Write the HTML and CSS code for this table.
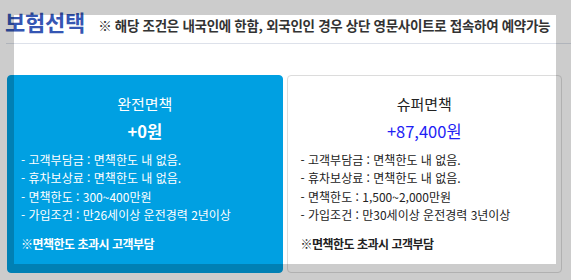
FILE: index.html
```html
<!DOCTYPE html>
<html lang="ko">
<head>
<meta charset="utf-8">
<link rel="stylesheet" href="styles.css">
</head>
<body>
<div class="header">
  <h2 class="title">보험선택</h2>
  <span class="notice">※ 해당 조건은 내국인에 한함, 외국인인 경우 상단 영문사이트로 접속하여 예약가능</span>
</div>
<div class="cards">
  <div class="card selected">
    <div class="card-name">완전면책</div>
    <div class="card-price">+0원</div>
    <ul class="terms">
      <li>- 고객부담금 : 면책한도 내 없음.</li>
      <li>- 휴차보상료 : 면책한도 내 없음.</li>
      <li>- 면책한도 : 300~400만원</li>
      <li>- 가입조건 : 만26세이상 운전경력 2년이상</li>
    </ul>
    <div class="note">※면책한도 초과시 고객부담</div>
  </div>
  <div class="card">
    <div class="card-name">슈퍼면책</div>
    <div class="card-price">+87,400원</div>
    <ul class="terms">
      <li>- 고객부담금 : 면책한도 내 없음.</li>
      <li>- 휴차보상료 : 면책한도 내 없음.</li>
      <li>- 면책한도 : 1,500~2,000만원</li>
      <li>- 가입조건 : 만30세이상 운전경력 3년이상</li>
    </ul>
    <div class="note">※면책한도 초과시 고객부담</div>
  </div>
</div>
<div class="spotlight"></div>
</body>
</html>
```
FILE: styles.css
```css
html, body {
  margin: 0;
  padding: 0;
  background: #ffffff;
  font-family: "Noto Sans CJK KR", "Noto Sans", sans-serif;
  overflow: hidden;
}
body {
  position: relative;
  width: 571px;
  height: 280px;
}
.header {
  display: flex;
  align-items: baseline;
  margin-left: 6px;
  height: 44px;
  border-bottom: 1px solid #dde1ea;
  box-sizing: border-box;
}
.title {
  margin: 0;
  margin-left: -1px;
  padding-top: 6px;
  font-size: 22px;
  line-height: 30px;
  font-weight: 700;
  color: #3556b3;
  letter-spacing: -0.2px;
}
.notice {
  margin-left: 13px;
  font-size: 13.5px;
  font-weight: 700;
  color: #333333;
  letter-spacing: -0.3px;
}
.cards {
  display: flex;
  gap: 4px;
  margin: 31px 9px 0 7px;
}
.card {
  flex: 1;
  height: 198px;
  box-sizing: border-box;
  border: 1px solid #dcdcdc;
  border-radius: 4px;
  background: #ffffff;
  color: #222222;
  padding: 16px 0 0 13px;
}
.card.selected {
  background: #00a0e2;
  border-color: #00a0e2;
  color: #ffffff;
}
.card-name {
  text-align: center;
  padding-right: 13px;
  font-size: 15px;
  line-height: 24px;
}
.card-price {
  text-align: center;
  padding-right: 13px;
  margin-top: 2px;
  font-size: 16.5px;
  line-height: 26px;
  color: #1f1ff5;
}
.selected .card-price {
  color: #ffffff;
  font-weight: 700;
}
.terms {
  list-style: none;
  margin: 7px 0 0;
  padding: 0;
  font-size: 12px;
  line-height: 18.4px;
}
.note {
  margin-top: 10px;
  font-size: 12px;
  line-height: 18.4px;
  font-weight: 700;
  letter-spacing: -0.5px;
}
.spotlight {
  position: absolute;
  left: 14px;
  top: 15px;
  width: 542px;
  height: 249px;
  box-shadow: 0 0 0 700px rgba(0, 0, 0, 0.2);
  pointer-events: none;
}
```
